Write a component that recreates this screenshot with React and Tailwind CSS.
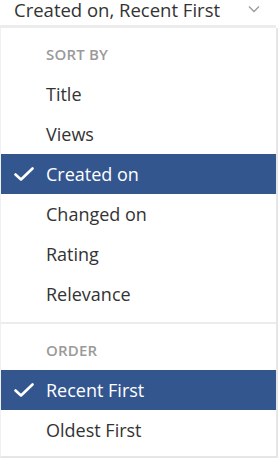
import React from "react";

const sortItems = ["Title", "Views", "Created on", "Changed on", "Rating", "Relevance"];
const orderItems = ["Recent First", "Oldest First"];

function Check() {
  return (
    <svg width="20" height="14" viewBox="0 0 20 14" fill="none" className="absolute left-[13px] top-1/2 -translate-y-1/2">
      <path d="M1.5 7.5 L7 12.5 L18.5 1.5" stroke="white" strokeWidth="2.6" strokeLinecap="round" strokeLinejoin="round" />
    </svg>
  );
}

function Item({ label, active }) {
  return (
    <div
      className={`relative h-10 flex items-center pl-[45px] text-[18px] ${
        active ? "bg-[#34568f] text-white" : "text-[#333333]"
      }`}
    >
      {active && <Check />}
      {label}
    </div>
  );
}

function GroupLabel({ children }) {
  return (
    <div className="pl-[45px] pt-[16px] pb-[10px] h-[46px] text-[15px] leading-5 font-semibold tracking-[0.2px] text-[#9a9a9a] uppercase">
      {children}
    </div>
  );
}

export default function App() {
  const sortBy = "Created on";
  const order = "Recent First";
  return (
    <div className="w-[278px] h-[458px] bg-white overflow-hidden" style={{ fontFamily: '"Open Sans", sans-serif' }}>
      <div className="h-[28px] flex items-start justify-between pl-[14px] pr-[16px] border-b-[3px] border-[#ececec] w-[276px]">
        <span className="text-[18.5px] leading-[19px] text-[#333333]">Created on, Recent First</span>
        <svg width="12" height="8" viewBox="0 0 12 8" fill="none" className="mt-[5px]">
          <path d="M1 1.5 L6 6.5 L11 1.5" stroke="#9a9a9a" strokeWidth="1.3" />
        </svg>
      </div>
      <div className="h-[430px] border-l border-l-[#f0f0f0] border-r-2 border-r-[#e6e6e6] border-b-2 border-b-[#e6e6e6]">
        <GroupLabel>Sort by</GroupLabel>
        {sortItems.map((s) => (
          <Item key={s} label={s} active={s === sortBy} />
        ))}
        <div className="h-2" />
        <div className="h-[2px] bg-[#ececec]" />
        <GroupLabel>Order</GroupLabel>
        {orderItems.map((s) => (
          <Item key={s} label={s} active={s === order} />
        ))}
      </div>
    </div>
  );
}
